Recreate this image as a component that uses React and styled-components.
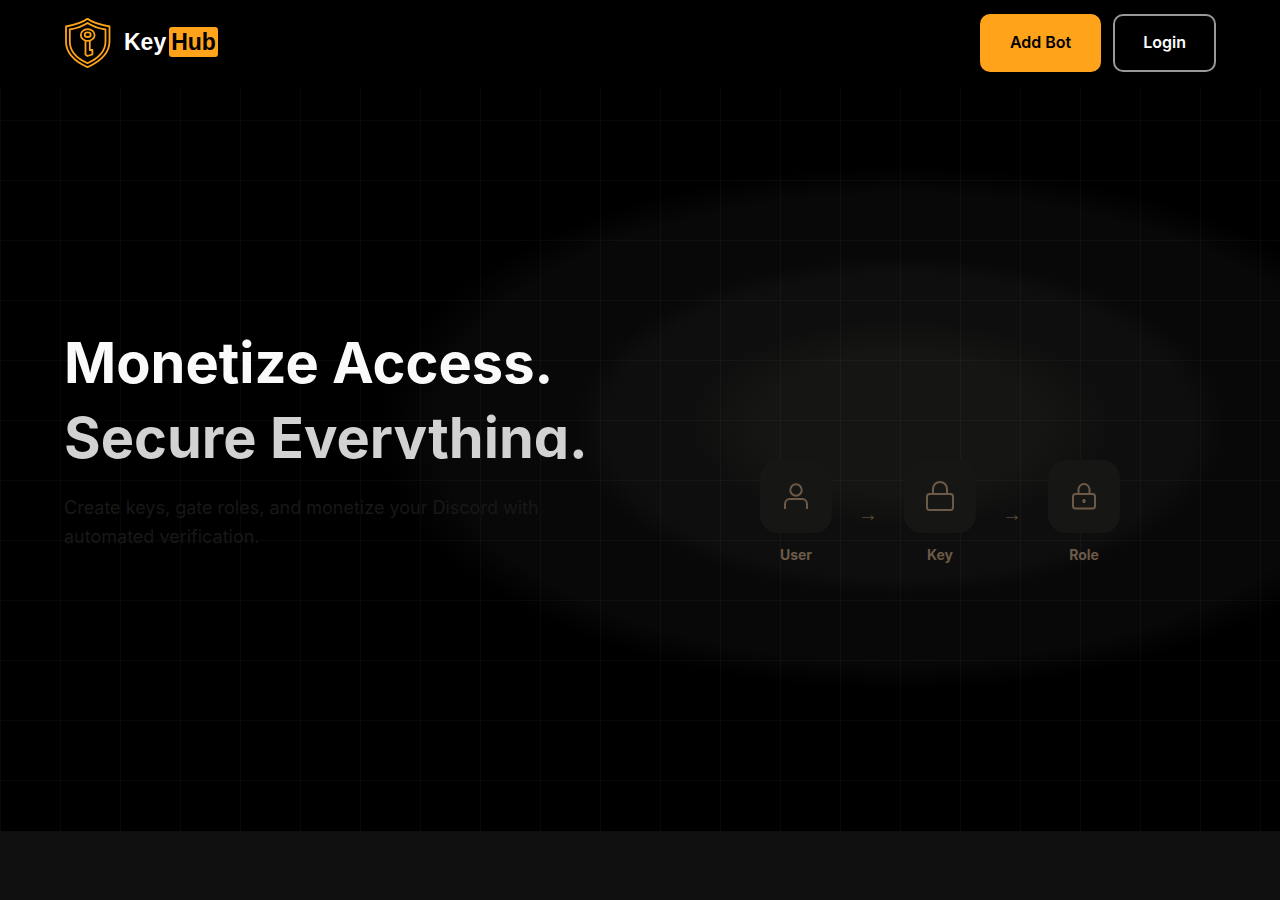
import React from "react";
import styled, { createGlobalStyle } from "styled-components";

const Global = createGlobalStyle`
  * { box-sizing: border-box; }
  body { margin: 0; background: #0f0f0f; font-family: Inter, "Liberation Sans", sans-serif; color: #fff; }
`;

const Page = styled.div`
  min-height: 100vh;
  display: flex;
  flex-direction: column;
`;

const Header = styled.header`
  display: flex;
  align-items: center;
  justify-content: space-between;
  padding: 14px 64px 16px;
  background: #000;
`;

const Brand = styled.a`
  display: flex;
  align-items: center;
  gap: 12px;
  padding-bottom: 2px;
  color: #fff;
  text-decoration: none;
  font: 700 23px/30px "Liberation Sans", Arial, sans-serif;
`;

const Wordmark = styled.span`
  display: flex;
  gap: 3px;
`;

const Tag = styled.span`
  padding: 0 2px;
  border-radius: 3px;
  background: #ffa31a;
  color: #000;
`;

const Actions = styled.div`
  display: flex;
  gap: 12px;
`;

const Button = styled.button`
  height: 58px;
  padding: 0 28px 2px;
  border: 2px solid ${(p) => (p.$primary ? "#ffa31a" : "#999")};
  border-radius: 10px;
  background: ${(p) => (p.$primary ? "#ffa31a" : "transparent")};
  color: ${(p) => (p.$primary ? "#000" : "#fff")};
  font: 600 16px/24px Inter, sans-serif;
`;

const Hero = styled.main`
  display: grid;
  grid-template-columns: 1fr 1fr;
  align-items: center;
  gap: 48px;
  min-height: 743px;
  padding: 0 64px;
  background:
    linear-gradient(#ffffff08 1px, transparent 1px) 0 32px / 60px 60px,
    linear-gradient(90deg, #ffffff08 1px, transparent 1px) 0 0 / 60px 60px,
    radial-gradient(ellipse 215px 105px at 70.3% 335px, #151513 66%, transparent),
    radial-gradient(ellipse 325px 169px at 70.3% 338px, #0e0e0e 90%, transparent),
    radial-gradient(ellipse 520px 262px at 70.3% 340px, #080808 89%, transparent),
    #000;
`;

const Intro = styled.section`
  padding-bottom: 42px;
`;

const Title = styled.h1`
  margin: 0;
  font-size: 56px;
  line-height: 75px;
  font-weight: 700;
`;

const TitleLine = styled.span`
  display: block;
  white-space: nowrap;
  color: #fafafa;
`;

const FadedLine = styled(TitleLine)`
  color: transparent;
  background: linear-gradient(#d2d2d2, #d2d2d2) 0 0 / 100% 58px no-repeat;
  background-clip: text;
`;

const Lead = styled.p`
  max-width: 480px;
  margin: 17px 0 0;
  font-size: 18px;
  line-height: 29px;
  color: #181818;
`;

const Flow = styled.div`
  display: flex;
  justify-content: center;
  gap: 26px;
  padding-top: 105px;
`;

const Step = styled.div`
  display: flex;
  flex-direction: column;
  align-items: center;
  gap: 12px;
  width: 72px;
  color: #6c5a48;
  font-size: 14px;
  line-height: 20px;
  font-weight: 700;
`;

const Tile = styled.div`
  display: grid;
  place-items: center;
  width: 72px;
  height: 73px;
  border-radius: 18px;
  background: #161614;
`;

const Arrow = styled.span`
  align-self: center;
  width: 20px;
  padding-top: 4px;
  font: 20px/24px "Liberation Sans", sans-serif;
  text-align: center;
  color: #5a4836;
`;

const Icon = ({ children }) => (
  <svg width="32" height="32" viewBox="0 0 32 32" fill="none" stroke="currentColor" strokeWidth="2" aria-hidden="true">
    {children}
  </svg>
);

const steps = [
  {
    label: "User",
    icon: (
      <Icon>
        <circle cx="16" cy="10" r="5.700" />
        <path d="M5 29V24a5 5 0 0 1 5-5h12a5 5 0 0 1 5 5v5" />
      </Icon>
    ),
  },
  {
    label: "Key",
    icon: (
      <Icon>
        <rect x="3" y="14" width="26" height="16" rx="2.500" />
        <path d="M9 14V9a7 7 0 0 1 14 0v5" />
      </Icon>
    ),
  },
  {
    label: "Role",
    icon: (
      <Icon>
        <rect x="5" y="14" width="22" height="14.500" rx="2.500" />
        <path d="M10.500 14V9.500a5.500 5.500 0 0 1 11 0V14M16 19v4" />
        <circle cx="16" cy="21" r="0.800" />
      </Icon>
    ),
  },
];

export default function App() {
  return (
    <Page>
      <Global />
      <Header>
        <Brand href="#">
          <svg width="48" height="52" viewBox="0 0 48 52" fill="none" stroke="#ffa31a" strokeWidth="1.800" strokeLinejoin="round" aria-hidden="true">
            <path d="M23.500 2.800C18 7 10 9 2 10.500v15c0 12 9 20 21.500 25.700C36 45.500 45.500 37.500 45.500 25.500v-15C37 9 29 7 23.500 2.800Z" />
            <path d="M23.500 7C18 10.500 12 12.500 5.800 13.500v12c0 10 7 17 17.700 21.700C34 42.500 41.500 35.500 41.500 25.500v-12C35 12.500 29 10.500 23.500 7Z" />
            <path d="M21.500 24.500v14l2 1.500 4.900-1.500v-4.500h-2.600v-9.500" />
            <ellipse cx="23.700" cy="19" rx="6.900" ry="5.900" />
            <ellipse cx="23.700" cy="18.700" rx="3" ry="2.300" />
          </svg>
          <Wordmark>
            <span>Key</span>
            <Tag>Hub</Tag>
          </Wordmark>
        </Brand>
        <Actions>
          <Button $primary>Add Bot</Button>
          <Button>Login</Button>
        </Actions>
      </Header>
      <Hero>
        <Intro>
          <Title>
            <TitleLine>Monetize Access.</TitleLine>
            <FadedLine>Secure Everything.</FadedLine>
          </Title>
          <Lead>Create keys, gate roles, and monetize your Discord with automated verification.</Lead>
        </Intro>
        <Flow>
          {steps.map((step, i) => (
            <React.Fragment key={step.label}>
              {i > 0 && <Arrow>→</Arrow>}
              <Step>
                <Tile>{step.icon}</Tile>
                <span>{step.label}</span>
              </Step>
            </React.Fragment>
          ))}
        </Flow>
      </Hero>
    </Page>
  );
}
